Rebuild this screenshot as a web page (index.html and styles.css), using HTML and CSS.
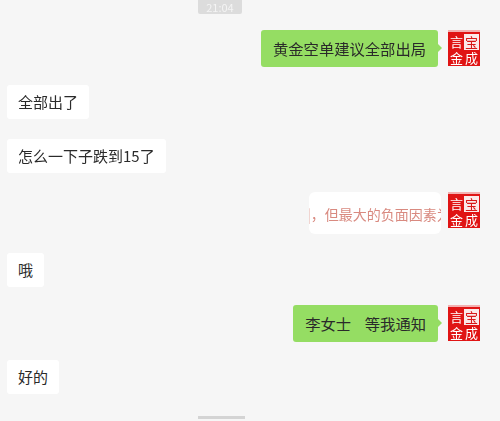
FILE: index.html
```html
<!DOCTYPE html>
<html lang="zh-CN">
<head>
    <meta charset="UTF-8">
    <meta name="viewport" content="width=device-width, initial-scale=1.0">
    <title>聊天记录</title>
    <link rel="stylesheet" href="styles.css">
</head>
<body>
    <div class="chat">
        <div class="time">21:04</div>

        <div class="row row-me row-first">
            <div class="bubble green">黄金空单建议全部出局</div>
            <div class="seal"><span>言</span><span class="light">宝</span><span>金</span><span>成</span></div>
        </div>

        <div class="row"><div class="bubble">全部出了</div></div>
        <div class="row row-wide"><div class="bubble">怎么一下子跌到15了</div></div>

        <div class="row row-me row-loose">
            <div class="bubble quote"><span class="quote-text">|，但最大的负面因素为</span></div>
            <div class="seal"><span>言</span><span class="light">宝</span><span>金</span><span>成</span></div>
        </div>

        <div class="row row-loose"><div class="bubble">哦</div></div>

        <div class="row row-me">
            <div class="bubble green">李女士&nbsp;&nbsp;&nbsp;&nbsp;等我通知</div>
            <div class="seal"><span>言</span><span class="light">宝</span><span>金</span><span>成</span></div>
        </div>

        <div class="row"><div class="bubble">好的</div></div>

        <div class="scroll-line"></div>
    </div>
</body>
</html>
```

FILE: styles.css
```css
html, body {
    margin: 0;
    padding: 0;
}
body {
    font-family: "Noto Sans CJK SC", "Liberation Sans", sans-serif;
    background-color: #f6f6f6;
    color: #2a2a2a;
}
.chat {
    display: flex;
    flex-direction: column;
    gap: 18px;
    height: 421px;
    overflow: hidden;
    filter: blur(0.4px);
}
.time {
    align-self: flex-start;
    margin-left: 198px;
    width: 44px;
    height: 14px;
    line-height: 14px;
    background: #dcdcdc;
    color: #f4f4f4;
    font-size: 11px;
    text-align: center;
    border-radius: 0 0 2px 2px;
}
.row {
    display: flex;
    align-items: flex-start;
    padding-left: 7px;
}
.row-first {
    margin-top: -2px;
}
.row-loose {
    margin-top: 1px;
}
.row-wide {
    margin-top: 2px;
}
.row-me {
    justify-content: flex-end;
    gap: 10px;
    padding-right: 20px;
}
.bubble {
    position: relative;
    height: 34px;
    line-height: 34px;
    padding: 0 11px;
    background: #fff;
    border-radius: 3px;
    font-size: 15px;
    white-space: nowrap;
}
.green {
    height: 37px;
    line-height: 37px;
    padding: 0 12px;
    background: #95dd63;
    font-size: 15.3px;
}
.green::after {
    content: "";
    position: absolute;
    right: -4px;
    top: 14px;
    border-left: 4px solid #95dd63;
    border-top: 4px solid transparent;
    border-bottom: 4px solid transparent;
}
.quote {
    display: flex;
    width: 132px;
    height: 42px;
    line-height: 45px;
    padding: 0;
    margin-right: -3px;
    overflow: hidden;
    border-radius: 6px;
    font-size: 14px;
    color: #d98a80;
}
.quote-text {
    margin-left: -2px;
}
.seal {
    display: grid;
    grid-template-columns: 1fr 1fr;
    grid-template-rows: 1fr 1fr;
    flex-shrink: 0;
    box-sizing: border-box;
    width: 32px;
    height: 36px;
    padding: 2px 1px 1px;
    background: #e01414;
    color: #fff;
    font-size: 13px;
    line-height: 16px;
    text-align: center;
    border-top: 2px solid #f3b0b0;
}
.seal .light {
    background: #fbe9e9;
    color: #d81818;
}
.scroll-line {
    align-self: flex-start;
    flex-shrink: 0;
    width: 47px;
    height: 3px;
    margin-left: 198px;
    margin-top: 4px;
    background: #d4d4d4;
}
```
